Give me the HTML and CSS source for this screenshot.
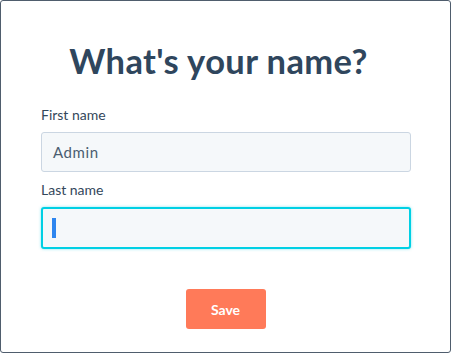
FILE: index.html
```html
<!DOCTYPE html>
<html>
<head>
<meta charset="utf-8">
<link rel="stylesheet" href="styles.css">
</head>
<body>
<div class="window">
  <h1 class="title">What's your name?</h1>
  <form class="form">
    <label class="label">First name</label>
    <div class="input">Admin</div>
    <label class="label label-second">Last name</label>
    <div class="input input-focus"><span class="caret"></span></div>
    <div class="actions">
      <button type="button" class="btn">Save</button>
    </div>
  </form>
</div>
</body>
</html>
```
FILE: styles.css
```css
html, body {
  margin: 0;
  padding: 0;
  background: #ffffff;
}
.window {
  box-sizing: border-box;
  width: 451px;
  height: 353px;
  border: 1px solid #4f5d6d;
  border-radius: 3px;
  background: #fff;
  font-family: Lato, "Open Sans", sans-serif;
  color: #33475b;
  padding: 0 40px;
}
.title {
  margin: 38px 0 0;
  padding-right: 14px;
  font-size: 34.5px;
  line-height: 44px;
  font-weight: 700;
  text-align: center;
  color: #2f465d;
  letter-spacing: 0.4px;
}
.form {
  display: flex;
  flex-direction: column;
  margin-top: 24px;
}
.label {
  font-size: 14px;
  line-height: 16px;
  color: #33475b;
  margin-bottom: 9px;
}
.label-second {
  margin-top: 10px;
  margin-bottom: 9px;
}
.input {
  box-sizing: border-box;
  height: 40px;
  width: 370px;
  border: 1px solid #cbd6e2;
  border-radius: 3px;
  background: #f5f8fa;
  font-size: 15px;
  line-height: 38px;
  padding: 0 11px;
  color: #4a5d70;
  letter-spacing: 0.6px;
}
.input-focus {
  height: 42px;
  border: 2px solid #00d0e4;
  box-shadow: 0 0 3px rgba(0, 208, 228, 0.5);
  display: flex;
  align-items: center;
  padding: 0 9px;
}
.caret {
  display: block;
  width: 4px;
  height: 20px;
  background: #2e86ef;
}
.actions {
  display: flex;
  justify-content: center;
  margin-top: 40px;
}
.btn {
  width: 80px;
  height: 40px;
  border: none;
  border-radius: 3px;
  background: #ff7a59;
  color: #fff;
  font-family: Lato, sans-serif;
  font-weight: 700;
  font-size: 14px;
  padding: 0;
}
```
